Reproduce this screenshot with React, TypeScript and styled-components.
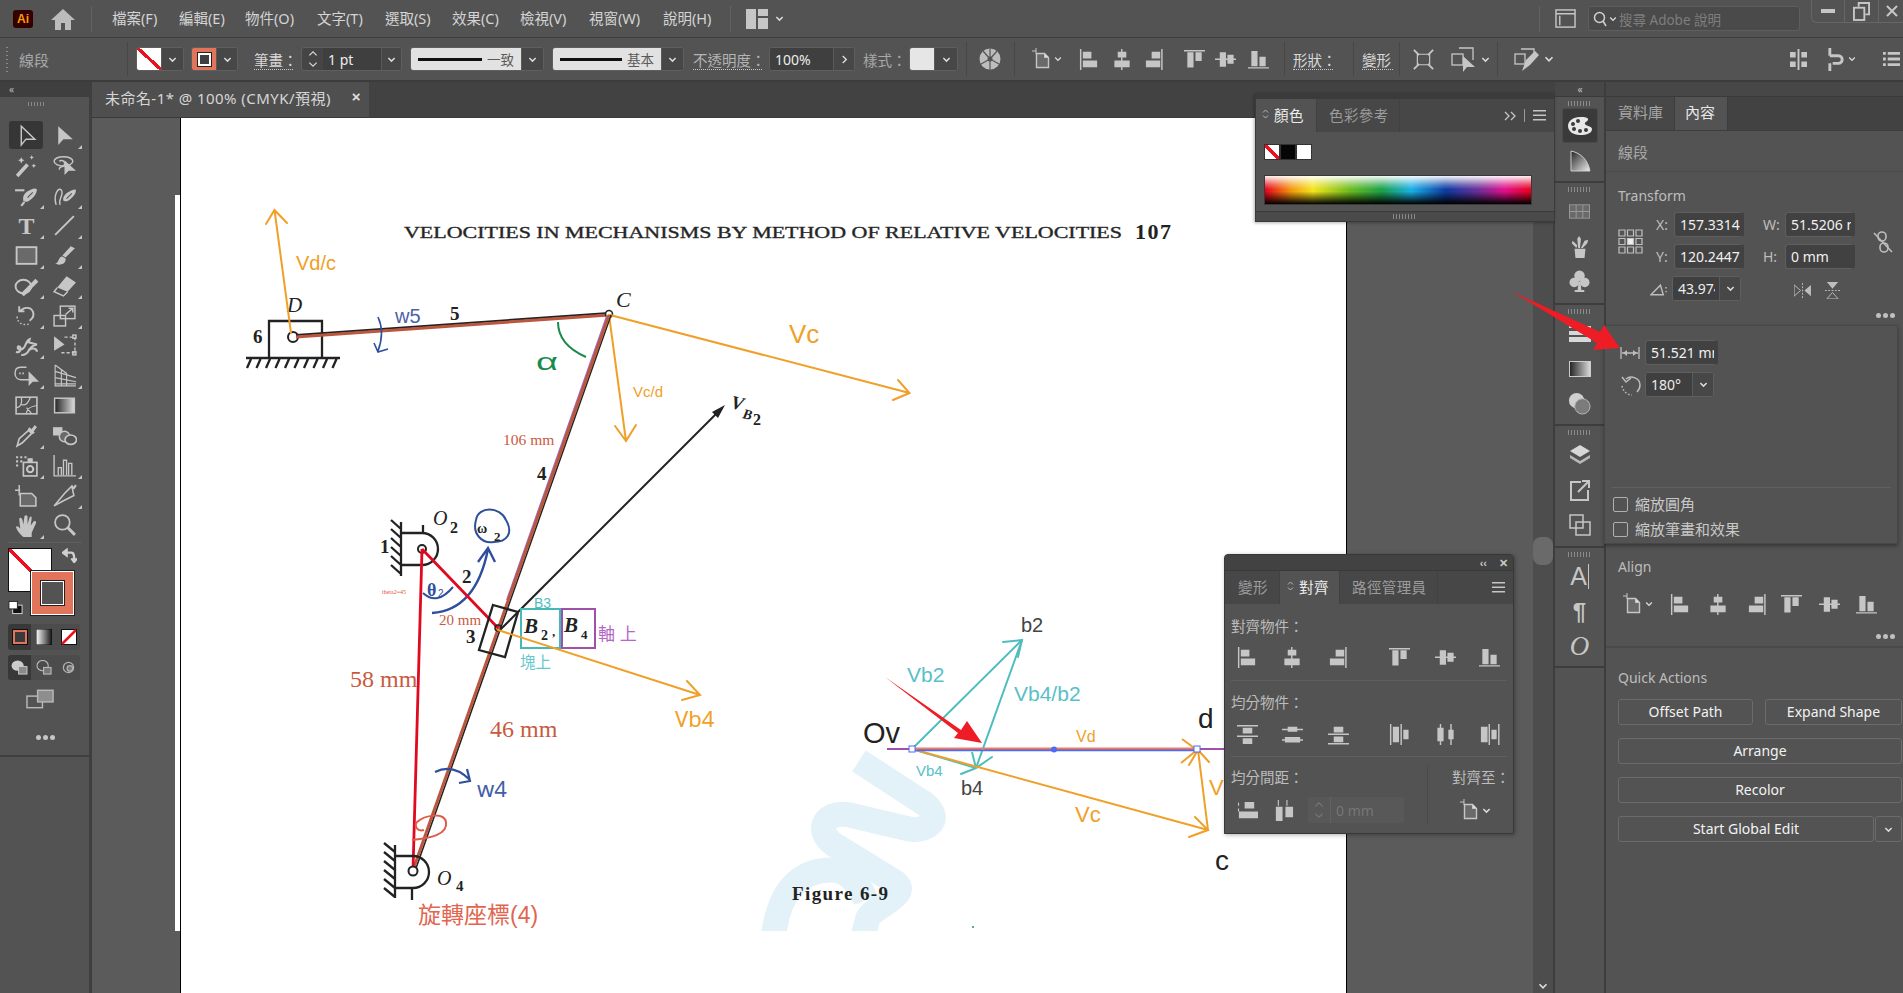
import React from 'react';
import styled, { createGlobalStyle } from 'styled-components';

const CJK = `"Noto Sans", "Noto Sans CJK TC", sans-serif`;
const SERIF = `"Liberation Serif", "Noto Sans CJK TC", serif`;
const SANS = `"Liberation Sans", "Noto Sans CJK TC", sans-serif`;

const Global = createGlobalStyle`
  html, body { margin: 0; padding: 0; background: #535353; overflow: hidden; }
  * { box-sizing: border-box; }
  body { font-family: ${CJK}; color: #c8c8c8; }
`;

const Page = styled.div`
  position: relative; width: 1903px; height: 993px; overflow: hidden;
  display: flex; flex-direction: column; background: #535353;
`;

/* ---------- shared small parts ---------- */
const Svg = styled.svg<{ $c?: string }>`
  display: block; flex: none; color: ${p => p.$c || '#c6c6c6'};
`;
const Chev = ({ s = 9 }: { s?: number }) => (
  <Svg viewBox="0 0 10 10" width={s} height={s} fill="none" stroke="currentColor" strokeWidth={1.6} $c="#dcdcdc">
    <path d="M1.5 3.2 5 6.8 8.5 3.2" />
  </Svg>
);
const AlignToIcon = () => (
  <Svg viewBox="0 0 20 22" width={20} height={22} $c="#c6c6c6">
    <path d="M0 3h4M4 0v6" stroke="currentColor" strokeWidth="1" fill="none" />
    <path d="M4.5 5.5h8l4 4v10h-12z" fill="#6a6a6a" stroke="currentColor" strokeWidth="1.4" />
    <path d="M12.5 5.5v4h4" fill="#ddd" stroke="currentColor" strokeWidth="1" />
  </Svg>
);
const alignPaths: Record<string, string> = {
  l: 'M1 0h1.5v22H1zM4 3h9v7H4zM4 12h15v7H4z',
  hc: 'M9.5 0H11v22H9.5zM6 3h9v6H6zM2.500 12h16v7h-16z',
  r: 'M18 0h1.500v22H18zM8 3h9v7H8zM2 12h15v7H2z',
  t: 'M0 1h22v1.500H0zM3.500 3.500h6.500v16H3.500zM12 3.500h6.500v9H12z',
  vc: 'M0 10h22v1.500H0zM5 3.500h6.500v15H5zM13 6h6.500v9.500H13z',
  b: 'M0 19h22v1.500H0zM3.500 2h6.500v16H3.500zM12 8h6.500v10H12z',
  dt: 'M0 1h22v1.500H0zM0 12h22v1.500H0zM6 4h10v6H6zM6 15h10v6H6z',
  dvc: 'M0 5h22v1.500H0zM0 16h22v1.500H0zM6 3h10v5H6zM3 13.500h16v6H3z',
  db: 'M0 10h22v1.500H0zM0 20h22v1.500H0zM6 3h10v6H6zM6 13h10v6H6z',
  dl: 'M1 0h1.500v22H1zM12 0h1.500v22H12zM4 3h6.500v16H4zM15 6h5.500v10H15z',
  dhc: 'M5 0h1.500v22H5zM16 0h1.500v22H16zM2.500 4h6.500v14H2.500zM14 6h5.500v10H14z',
  dr: 'M10 0h1.500v22H10zM20 0h1.500v22H20zM2 3h7v16H2zM13 6h5.500v10H13z',
  sv: 'M8 2h10v7H8zM2 12h20v7H2zM1 3h1.200v3H1zM1 9h1.200v3H1z',
  sh: 'M3 7h7v15H3zM13 7h8v11h-8zM5 0h1.200v6H5zM14 0h1.200v6H14z',
};
const AlignIcon = ({ k, s = 21 }: { k: string; s?: number }) => (
  <Svg viewBox="0 0 22 22" width={s} height={s} $c="#c6c6c6">
    <path d={alignPaths[k]} fill="currentColor" />
  </Svg>
);
const Dots = styled.div<{ $mt?: number }>`
  display: flex; justify-content: flex-end; gap: 2px; margin-top: ${p => p.$mt || 0}px; padding-right: 8px;
  & > i { width: 5px; height: 5px; border-radius: 50%; background: #c0c0c0; display: block; }
`;
const ThreeDots = ({ mt }: { mt?: number }) => <Dots $mt={mt}><i /><i /><i /></Dots>;
const SpinIcon = () => (
  <Svg viewBox="0 0 7 12" width={7} height={12} fill="none" stroke="#b8b8b8" strokeWidth="1"><path d="M1 4.500L3.500 2L6 4.500M1 7.500L3.500 10L6 7.500" /></Svg>
);
const Burger = () => (
  <Svg viewBox="0 0 13 11" width={13} height={11} $c="#c6c6c6"><path d="M0 0h13v1.500H0zM0 4.500h13v1.500H0zM0 9h13v1.500H0z" fill="currentColor" /></Svg>
);

/* ---------- menu bar ---------- */
const MenuBar = styled.div`
  height: 38px; flex: none; display: flex; align-items: center; background: #535353;
  border-bottom: 1px solid #3d3d3d; padding-left: 13px; position: relative;
`;
const AiLogo = styled.div`
  width: 20px; height: 18px; background: #330000; border-radius: 3px; color: #ff9a00;
  font: bold 12px/18px ${SANS}; text-align: center; margin-right: 18px;
`;
const MenuSep = styled.div<{ $ml: number }>`
  width: 1px; height: 26px; background: #626262; margin-left: ${p => p.$ml}px;
`;
const MenuItem = styled.div<{ $w: number; $ml?: number }>`
  width: ${p => p.$w}px; margin-left: ${p => p.$ml || 0}px; font-size: 14.500px; color: #d4d4d4; white-space: nowrap;
  padding-bottom: 3px;
`;
const WorkspaceBtn = styled.div`
  display: flex; align-items: center; gap: 7px; margin-left: 15px;
`;
const PanelIconSlot = styled.div`
  margin-left: auto; display: flex; align-items: center; height: 100%;
`;
const TopSep = styled.div`
  width: 1px; height: 26px; background: #626262; margin-right: 15px;
`;
const SearchBox = styled.div`
  width: 212px; height: 25px; margin-left: 12px; margin-right: 11px; background: #4a4a4a; border: 1px solid #5e5e5e;
  border-radius: 3px; display: flex; align-items: center; gap: 2px; padding-left: 4px; font-size: 13.500px; color: #7e7e7e;
`;
const WinBox = styled.div`
  width: 92px; height: 23px; align-self: flex-start; border: 1px solid #666; border-top: 0; border-right: 0;
  border-bottom-left-radius: 6px; display: grid; grid-template-columns: 33px 34px 25px; align-items: center; justify-items: center;
`;
const WinCell = styled.div`
  width: 100%; height: 100%; display: flex; align-items: center; justify-content: center; border-right: 1px solid #666;
  &:last-child { border-right: 0; }
`;

/* ---------- control bar ---------- */
const ControlBar = styled.div`
  height: 44px; flex: none; display: flex; align-items: center; background: #535353; padding-left: 19px; position: relative;
  border-bottom: 2px solid #3c3c3c;
`;
const Grip = styled.div`
  position: absolute; left: 6px; top: 9px; width: 2px; height: 26px;
  background: repeating-linear-gradient(#8a8a8a 0 1px, transparent 1px 4px);
`;
const CtlTitle = styled.div`
  width: 108px; font-size: 15px; color: #a8a8a8;
`;
const CtlSep = styled.div<{ $ml?: number }>`
  width: 1px; height: 34px; background: #474747; margin-left: ${p => p.$ml || 0}px;
`;
const Combo = styled.div<{ $ml: number; $w: number; $h?: number }>`
  display: flex; align-items: stretch; height: ${p => p.$h || 24}px; width: ${p => p.$w}px; margin-left: ${p => p.$ml}px;
  border: 1px solid #5f5f5f; border-radius: 3px; background: #454545; overflow: hidden; flex: none;
`;
const ComboChev = styled.div`
  flex: 1; display: flex; align-items: center; justify-content: center; background: #474747; border-left: 1px solid #5a5a5a;
`;
const ComboField = styled.div<{ $w: number }>`
  width: ${p => p.$w}px; flex: none; overflow: hidden; white-space: nowrap; display: flex; align-items: center;
  padding-left: 5px; color: #ececec; font-size: 14px; background: #3f3f3f; border-right: 4px solid #3f3f3f;
`;
const NoneSwatch = styled.div`
  width: 24px; flex: none; background: linear-gradient(to top right, #fff 0 46%, #e8141c 46% 56%, #fff 56%);
`;
const StrokeSwatch = styled.div`
  width: 24px; flex: none; background: #e0755c; display: flex; align-items: center; justify-content: center;
  &::after { content: ''; width: 9px; height: 9px; border: 2px solid #fff; background: #3f3f3f; box-shadow: 0 0 0 1px #222; }
`;
const LightSwatch = styled.div`
  width: 24px; flex: none; background: #e6e6e6;
`;
const DashSwatch = styled.div<{ $w: number }>`
  width: ${p => p.$w}px; flex: none; background: #e2e2e2; display: flex; align-items: center; padding: 0 7px; gap: 5px;
  font-size: 13.500px; color: #5a5a5a; white-space: nowrap;
  & > b { display: block; flex: 1; height: 3px; background: #111; }
`;
const Stepper = styled.div`
  width: 21px; flex: none; display: flex; flex-direction: column; align-items: center; justify-content: center; gap: 1px;
`;
const CtlLabel = styled.div<{ $ml: number; $w: number; $dim?: boolean }>`
  width: ${p => p.$w}px; margin-left: ${p => p.$ml}px; flex: none; font-size: 14.500px; white-space: nowrap;
  color: ${p => p.$dim ? '#b4b4b4' : '#d8d8d8'}; border-bottom: 1px dotted #c8c8c8; line-height: 18px; margin-top: 2px;
`;
const PlainLabel = styled(CtlLabel)`
  border-bottom: 0; color: #a8a8a8;
`;
const CtlIcon = styled.div<{ $ml: number; $w: number }>`
  width: ${p => p.$w}px; margin-left: ${p => p.$ml}px; flex: none; display: flex; align-items: center; justify-content: center; gap: 2px;
`;
const CtlRight = styled.div`
  margin-left: auto; display: flex; align-items: center; padding-right: 3px;
`;

/* ---------- main ---------- */
const Main = styled.div`
  flex: 1; min-height: 0; display: flex;
`;
const LeftDock = styled.div`
  width: 92px; flex: none; display: flex; flex-direction: column; background: #3f3f3f;
`;
const LeftHead = styled.div`
  height: 15px; flex: none; padding-left: 9px; font-size: 10px; line-height: 14px; color: #bdbdbd; background: #3f3f3f; letter-spacing: -1px;
`;
const Toolbar = styled.div`
  width: 89px; flex: 1; background: #535353; display: flex; flex-direction: column; padding-left: 8px;
`;
const ToolGrip = styled.div`
  width: 18px; height: 4px; margin: 5px 0 14px 20px; flex: none;
  background: repeating-linear-gradient(90deg, #888 0 1px, transparent 1px 3px);
`;
const ToolGrid = styled.div`
  display: grid; grid-template-columns: 38px 38px; grid-auto-rows: 30px; flex: none;
`;
const ToolCell = styled.div<{ $active?: boolean; $corner?: boolean }>`
  position: relative; display: flex; align-items: center; justify-content: center; width: 34px; height: 28px; margin-left: 1px; align-self: center;
  background: ${p => p.$active ? '#363636' : 'transparent'}; border-radius: 3px;
  &::after { content: ''; display: ${p => p.$corner ? 'block' : 'none'}; position: absolute; right: -1px; bottom: 0;
    border-left: 4px solid transparent; border-bottom: 4px solid #c6c6c6; }
`;
const ToolSep = styled.div`
  height: 1px; background: #5e5e5e; width: 74px; margin-top: 2px; flex: none;
`;
const ColorWell = styled.div`
  position: relative; height: 67px; margin-top: 5px; flex: none;
`;
const FillBox = styled.div`
  position: absolute; left: 0; top: 0; width: 44px; height: 44px; border: 1px solid #111;
  background: linear-gradient(to top right, #fff 0 47%, #ee1020 47% 53%, #fff 53%);
`;
const StrokeBox = styled.div`
  position: absolute; left: 23px; top: 23px; width: 43px; height: 44px; background: #e0755c; border: 1px solid #fff; outline: 1px solid #222;
  display: flex; align-items: center; justify-content: center;
  &::after { content: ''; width: 21px; height: 22px; background: #535353; border: 1px solid #fff; outline: 1px solid #222; }
`;
const SwapSlot = styled.div`
  position: absolute; left: 54px; top: 0;
`;
const DefaultSlot = styled.div`
  position: absolute; left: 0; top: 52px;
`;
const ModeRow = styled.div<{ $mt: number; $h: number }>`
  width: 72px; height: ${p => p.$h}px; margin-top: ${p => p.$mt}px; display: grid; grid-template-columns: 23px 26px 23px; flex: none;
  background: #4c4c4c; border-radius: 3px; overflow: hidden;
`;
const ModeCell = styled.div<{ $active?: boolean }>`
  display: flex; align-items: center; justify-content: center; background: ${p => p.$active ? '#383838' : 'transparent'};
`;
const ScreenBtn = styled.div`
  margin: 9px 0 0 18px; flex: none;
`;
const ToolDots = styled.div`
  margin: 26px 0 0 28px; display: flex; gap: 2px; flex: none;
  & > i { width: 5px; height: 5px; border-radius: 50%; background: #c6c6c6; display: block; }
`;
const ToolEnd = styled.div`
  height: 2px; margin: 15px 0 0 -8px; background: #3f3f3f; flex: none;
`;

const Center = styled.div`
  flex: 1; min-width: 0; display: flex; flex-direction: column; background: #424242;
`;
const TabBar = styled.div`
  height: 36px; flex: none; display: flex; background: #424242; border-bottom: 1px solid #3a3a3a;
`;
const DocTab = styled.div`
  width: 277px; background: #4f4f4f; display: flex; align-items: center; padding: 0 0 4px 13px; font-size: 15px; letter-spacing: .45px; color: #d6d6d6; white-space: nowrap;
  position: relative;
`;
const DocClose = styled.span`
  position: absolute; right: 8px; top: 6px; font: bold 15px/18px ${SANS}; color: #e0e0e0;
`;
const CanvasRow = styled.div`
  flex: 1; min-height: 0; display: flex;
`;
const Canvas = styled.div`
  flex: 1; position: relative; background: #5b5b5b; overflow: hidden;
`;
const PasteStrip = styled.div`
  position: absolute; left: 83px; top: 77px; width: 5px; height: 736px; background: #fff;
`;
const Artboard = styled.div`
  position: absolute; left: 88px; top: 0; width: 1167px; height: 875px; background: #fff;
  border-left: 1.500px solid #000; border-right: 1.500px solid #000;
`;
const VScroll = styled.div`
  width: 22px; flex: none; background: #4d4d4d; border-right: 2px solid #3d3d3d; position: relative;
`;
const ScrollThumb = styled.div`
  position: absolute; left: 0; top: 419px; width: 20px; height: 28px; border-radius: 8px; background: #6a6a6a;
`;
const ScrollDown = styled.div`
  position: absolute; left: 5px; bottom: 2px;
`;

/* ---------- dock strip ---------- */
const Dock = styled.div`
  width: 51px; flex: none; display: flex; flex-direction: column; background: #535353; border-right: 2px solid #3d3d3d;
`;
const DockHead = styled.div`
  height: 15px; flex: none; background: #474747; border-bottom: 1px solid #3a3a3a; text-align: center; font-size: 10px; line-height: 14px; color: #c4c4c4; letter-spacing: -1px;
`;
const DockGroup = styled.div<{ $h: number }>`
  height: ${p => p.$h}px; flex: none; border-bottom: 2px solid #3d3d3d; display: flex; flex-direction: column; align-items: center;
`;
const DockGrip = styled.div`
  width: 24px; height: 5px; margin: 4px 0 2px; flex: none;
  background: repeating-linear-gradient(90deg, #8a8a8a 0 1px, transparent 1px 3px);
`;
const DockBtn = styled.div<{ $active?: boolean }>`
  width: 36px; height: 35px; flex: none; display: flex; align-items: center; justify-content: center; border-radius: 3px;
  background: ${p => p.$active ? '#3a3a3a' : 'transparent'}; border: ${p => p.$active ? '1px solid #4a4a4a' : '0'};
`;
const GlyphA = styled.span`
  font: 25px/1 ${SANS}; color: #c6c6c6; border-right: 1px solid #c6c6c6; padding-right: 1px;
`;
const GlyphPil = styled.span`
  font: bold 24px/1 ${SANS}; color: #c6c6c6;
`;
const GlyphO = styled.span`
  font: italic 27px/1 ${SERIF}; color: #c6c6c6;
`;

/* ---------- properties ---------- */
const Props = styled.div`
  width: 297px; flex: none; display: flex; flex-direction: column; background: #535353;
`;
const PropsHead = styled.div`
  height: 15px; flex: none; background: #474747; border-bottom: 1px solid #3a3a3a;
`;
const PropTabs = styled.div`
  height: 34px; flex: none; display: flex; background: #424242; border-bottom: 1px solid #3d3d3d;
`;
const PropTab = styled.div<{ $w: number; $active?: boolean; $pl: number }>`
  width: ${p => p.$w}px; padding-left: ${p => p.$pl}px; line-height: 31px; font-size: 15px;
  background: ${p => p.$active ? '#535353' : '#474747'}; color: ${p => p.$active ? '#e6e6e6' : '#a6a6a6'};
  border-right: 1px solid #3d3d3d;
`;
const PropTitle = styled.div`
  height: 41px; flex: none; padding-left: 12px; line-height: 43px; font-size: 15px; color: #a8a8a8; border-bottom: 1px solid #4a4a4a;
`;
const Section = styled.div<{ $h: number }>`
  height: ${p => p.$h}px; flex: none; padding-left: 12px; position: relative;
`;
const SecTitle = styled.div<{ $mt: number }>`
  font-size: 14px; line-height: 18px; color: #bdbdbd; margin-top: ${p => p.$mt}px;
`;
const TransformGrid = styled.div`
  display: grid; grid-template-columns: 38px 18px 70px 19px 22px 70px 18px 19px; grid-auto-rows: 25px; row-gap: 7px; margin-top: 7px;
`;
const RefPoint = styled.div`
  grid-row: 1 / span 2; grid-column: 1; align-self: center; margin-top: 2px;
`;
const FieldLabel = styled.div<{ $col: number }>`
  grid-column: ${p => p.$col}; font-size: 14px; line-height: 25px; color: #bdbdbd;
`;
const Field = styled.div<{ $col?: number; $w?: number }>`
  ${p => p.$col ? `grid-column: ${p.$col};` : ''} ${p => p.$w ? `width: ${p.$w}px; flex: none;` : ''}
  height: 25px; background: #414141; border: 1px solid #5e5e5e; border-right: 4px solid #414141; border-radius: 3px; padding-left: 5px;
  font-size: 14px; line-height: 23px; color: #f0f0f0; overflow: hidden; white-space: nowrap;
`;
const LinkSlot = styled.div`
  grid-row: 1 / span 2; grid-column: 8; align-self: center; margin-top: 2px;
`;
const AngleRow = styled.div`
  grid-column: 1 / span 3; display: flex; align-items: center; padding-left: 32px; gap: 4px;
`;
const FlipRow = styled.div`
  grid-column: 4 / span 4; display: flex; align-items: center; padding: 3px 0 0 50px; gap: 14px;
`;
const ActionRow = styled.div<{ $cols: string; $mt: number }>`
  display: grid; grid-template-columns: ${p => p.$cols}; gap: 1px 12px; margin-top: ${p => p.$mt}px; padding-right: 1px;
`;
const ActionBtn = styled.div`
  height: 26px; border: 1.500px solid #6b6b6b; border-radius: 3px; text-align: center; font-size: 14px; line-height: 23px; color: #f2f2f2;
`;
const SplitRow = styled.div`
  display: flex; gap: 1px; margin-top: 13px; padding-right: 1px;
`;
const SplitMain = styled(ActionBtn)`
  width: 256px;
`;
const SplitChev = styled(ActionBtn)`
  flex: 1; display: flex; align-items: center; justify-content: center;
`;
const AlignRow = styled.div`
  display: grid; grid-template-columns: 48px 38px 39px 34px 38px 37px 24px; margin: 16px 0 0 4px; height: 24px; align-items: center; justify-items: start;
`;
const SecRule = styled.div<{ $mt: number }>`
  height: 2px; background: #4a4a4a; margin: ${p => p.$mt}px 0 0 -12px; flex: none;
`;

/* ---------- floating panels ---------- */
const Popover = styled.div`
  position: absolute; left: 1604px; top: 325px; width: 294px; height: 219px; background: #535353; border: 1px solid #474747;
  box-shadow: 0 2px 4px rgba(0,0,0,.35); padding: 14px 0 0 15px; display: flex; flex-direction: column;
`;
const PopRow = styled.div<{ $mt?: number }>`
  display: flex; align-items: center; gap: 5px; margin-top: ${p => p.$mt || 0}px;
`;
const PopRule = styled.div`
  height: 1px; background: #606060; margin: 90px 6px 0 -8px;
`;
const CheckRow = styled.div<{ $mt: number }>`
  display: flex; align-items: center; gap: 7px; margin: ${p => p.$mt}px 0 0 -7px; font-size: 15px; line-height: 15px; color: #c8c8c8;
`;
const CheckBox = styled.div`
  width: 15px; height: 15px; border: 1.500px solid #b0b0b0; border-radius: 2px;
`;
const ColorPanel = styled.div`
  position: absolute; left: 1255px; top: 93px; width: 300px; height: 129px; background: #535353; border: 1px solid #3a3a3a;
  display: flex; flex-direction: column; box-shadow: -1px 1px 3px rgba(0,0,0,.3);
`;
const PanelStrip = styled.div`
  height: 5px; background: #3b3b3b; flex: none;
`;
const PanelTabs = styled.div<{ $h: number }>`
  height: ${p => p.$h}px; flex: none; display: flex; align-items: stretch; background: #474747; position: relative;
`;
const PanelTab = styled.div<{ $w: number; $active?: boolean; $pl: number }>`
  width: ${p => p.$w}px; padding: 0 0 3px ${p => p.$pl}px; display: flex; align-items: center; gap: 5px; font-size: 14.500px; flex: none; white-space: nowrap;
  background: ${p => p.$active ? '#535353' : '#474747'}; color: ${p => p.$active ? '#ececec' : '#9c9c9c'}; border-right: 1px solid #414141; letter-spacing: .4px;
`;
const TabTools = styled.div`
  margin-left: auto; display: flex; align-items: center; gap: 8px; padding-right: 8px; color: #c4c4c4; font-size: 13px;
`;
const VDiv = styled.div`
  width: 1px; height: 13px; background: #9a9a9a;
`;
const Swatches = styled.div`
  display: flex; margin: 12px 0 0 8px; flex: none;
`;
const Sw = styled.div<{ $bg: string }>`
  width: 16px; height: 16px; background: ${p => p.$bg}; border: 1px solid #333;
`;
const Spectrum = styled.div`
  margin: 15px 0 0 8px; width: 268px; height: 30px; flex: none; border: 1px solid #3a3a3a;
  background:
    linear-gradient(to bottom, rgba(255,255,255,.95) 0%, rgba(255,255,255,.3) 30%, rgba(255,255,255,0) 48%, rgba(0,0,0,0) 55%, rgba(0,0,0,.9) 96%, #000 100%),
    linear-gradient(to right, #e8001c 0%, #f39a10 10%, #f5e51c 18%, #6cbb1f 32%, #1aa04a 44%, #1ab0e6 55%, #0c3aa0 68%, #6a2f98 80%, #e0108c 90%, #e8001c 100%);
`;
const PanelGrip = styled.div`
  margin-top: auto; height: 10px; flex: none; background: #4a4a4a; border-top: 1px solid #3a3a3a; display: flex; justify-content: center; align-items: center;
  &::after { content: ''; width: 24px; height: 5px; background: repeating-linear-gradient(90deg, #8a8a8a 0 1px, transparent 1px 3px); }
`;
const AlignPanel = styled.div`
  position: absolute; left: 1224px; top: 554px; width: 290px; height: 280px; background: #535353; border: 1px solid #383838; border-radius: 4px 4px 0 0;
  display: flex; flex-direction: column; box-shadow: 1px 1px 4px rgba(0,0,0,.3);
`;
const AlignHead = styled.div`
  height: 16px; flex: none; background: #424242; display: flex; justify-content: flex-end; align-items: center; gap: 12px; padding-right: 5px;
  font: bold 11px/14px ${SANS}; color: #c8c8c8; border-bottom: 1px solid #3a3a3a;
`;
const ABody = styled.div<{ $h: number }>`
  height: ${p => p.$h}px; flex: none; border-bottom: 1px solid #5f5f5f; margin: 0 6px;
`;
const ALabel = styled.div<{ $mt: number }>`
  font-size: 14.500px; line-height: 22px; color: #bcbcbc; margin: ${p => p.$mt}px 0 0 0; white-space: nowrap;
`;
const IconSix = styled.div<{ $mt: number }>`
  display: grid; grid-template-columns: 45px 46px 61px 46px 44px 24px; padding-left: 6px; margin-top: ${p => p.$mt}px; height: 24px; align-items: center; justify-items: start;
`;
const ABottom = styled.div`
  flex: 1; display: flex; margin: 0 6px; min-height: 0;
`;
const ALeft = styled.div`
  width: 196px; flex: none;
`;
const ARight = styled.div`
  flex: 1; border-left: 1px solid #4a4a4a; margin: 8px 0 8px 0; text-align: right; display: flex; flex-direction: column; align-items: flex-end;
`;
const SpaceRow = styled.div`
  display: flex; align-items: center; margin-top: 9px; padding-left: 6px; gap: 15px;
`;
const GhostInput = styled.div`
  width: 96px; height: 26px; margin-left: -1px; background: #585858; display: flex; align-items: center; border-radius: 2px; color: #767676; font-size: 14px;
`;
const GhostStep = styled.div`
  width: 23px; display: flex; align-items: center; justify-content: center; border-right: 1px solid #626262; height: 100%;
`;
const GhostVal = styled.span`
  padding-left: 5px;
`;
const RightLabel = styled.div`
  font-size: 14.500px; line-height: 22px; color: #bcbcbc; margin: 1px -3px 0 0; white-space: nowrap;
`;
const RightIcon = styled.div`
  display: flex; align-items: center; gap: 2px; margin: 11px 16px 0 0;
`;
const Overlay = styled.svg`
  position: absolute; left: 0; top: 0; pointer-events: none;
`;

/* ---------- diagram text ---------- */
const T = styled.text<{ $s: number; $c?: string; $f?: string; $b?: boolean; $i?: boolean }>`
  font-family: ${p => p.$f || SANS}; font-size: ${p => p.$s}px; fill: ${p => p.$c || '#222'};
  font-weight: ${p => p.$b ? 700 : 400}; font-style: ${p => p.$i ? 'italic' : 'normal'};
`;
const DiagramSvg = styled.svg`
  display: block;
`;

const OR = '#f0a028', TEAL = '#4fbdc0', BR = '#b9573f', RED = '#e0091f', BLUE = '#2f4f9c', NOTE = '#c95a3f';

const Arrow = ({ a, b, h1, h2, c, w = 2 }: { a: number[]; b: number[]; h1: number[]; h2: number[]; c: string; w?: number }) => (
  <path d={`M${a[0]} ${a[1]}L${b[0]} ${b[1]}M${h1[0]} ${h1[1]}L${b[0]} ${b[1]}L${h2[0]} ${h2[1]}`} stroke={c} strokeWidth={w} fill="none" strokeLinecap="round" />
);

const hatchH = Array.from({ length: 10 }, (_, i) => `M${251 + i * 9.500} 359l-4 9`).join('');
const hatchO2 = Array.from({ length: 6 }, (_, i) => `M401 ${529 + i * 9}l-10 -9`).join('');
const hatchO4 = Array.from({ length: 6 }, (_, i) => `M395 ${852 + i * 9}l-11 -9`).join('');

const Diagram = () => (
  <DiagramSvg width="1164" height="875" viewBox="181 118 1164 875">
    {/* watermark */}
    <g clipPath="url(#wm)">
      <path d="M859 761L925 804C945 820 925 834 905 828L850 815C820 810 815 835 838 847L895 882C912 895 875 905 868 918L862 940"
        fill="none" stroke="#e2f2f8" strokeWidth="25" />
      <path d="M773 940C778 890 800 870 832 870C850 870 862 890 866 900" fill="none" stroke="#e2f2f8" strokeWidth="25" />
    </g>
    <defs><clipPath id="wm"><rect x="181" y="118" width="1164" height="813" /></clipPath></defs>

    <T x="404" y="238" $s={17} $f={SERIF} textLength={718} lengthAdjust="spacingAndGlyphs" $c="#222" stroke="#333" strokeWidth=".4">VELOCITIES IN MECHANISMS BY METHOD OF RELATIVE VELOCITIES</T>
    <T x="1135" y="239" $s={22} $f={SERIF} $b $c="#222" textLength={36}>107</T>

    {/* upper slider */}
    <path d={`M269 357V321H322V357M246 358H340${hatchH}`} stroke="#222" strokeWidth="2.300" fill="none" />
    <circle cx="293" cy="337" r="5" fill="#fff" stroke="#222" strokeWidth="2" />
    <T x="253" y="343" $s={19} $f={SERIF} $b>6</T>
    <T x="287" y="312" $s={21} $f={SERIF} $i>D</T>
    <Arrow a={[291, 333]} b={[274.500, 210]} h1={[266, 224]} h2={[287, 223]} c={OR} />
    <T x="296" y="270" $s={20} $c={OR}>Vd/c</T>

    {/* link 5 */}
    <path d="M296 335L609 313" stroke="#222" strokeWidth="2" />
    <path d="M296 337L609 315" stroke={BR} strokeWidth="3" />
    <circle cx="609" cy="314" r="3.500" fill="#fff" stroke="#222" strokeWidth="1.600" />
    <T x="450" y="320" $s={19} $f={SERIF} $b>5</T>
    <T x="395" y="323" $s={20} $c="#4a62a8">w5</T>
    <path d="M378 317Q385 332 378 351M374 343L378 352L388 349" stroke={BLUE} strokeWidth="1.600" fill="none" />
    <T x="616" y="307" $s={22} $f={SERIF} $i>C</T>
    <path d="M558 322C558 340 570 350 586 357" stroke="#1c8a4c" strokeWidth="2" fill="none" />
    <T x="536" y="370" $s={24} $c="#1c8a4c" textLength={22} lengthAdjust="spacingAndGlyphs">α</T>

    <Arrow a={[610, 315]} b={[909.500, 393]} h1={[898, 380]} h2={[893, 400]} c={OR} />
    <T x="789" y="343" $s={26} $c={OR}>Vc</T>
    <Arrow a={[609, 315]} b={[626, 441]} h1={[615, 426]} h2={[636, 425]} c={OR} />
    <T x="633" y="397" $s={15} $c={OR}>Vc/d</T>

    {/* link 4 */}
    <path d="M611 315L415 871" stroke="#222" strokeWidth="1.600" />
    <path d="M607 316L507 600" stroke="#a06cc0" strokeWidth="2" />
    <path d="M609 315L413 870" stroke={BR} strokeWidth="3" />
    <T x="503" y="445" $s={15.500} $f={SERIF} $c={NOTE}>106 mm</T>
    <T x="537" y="480" $s={19} $f={SERIF} $b>4</T>

    <path d="M500 630L722 408" stroke="#222" strokeWidth="2" />
    <path d="M725 405L712 412L718 418Z" fill="#222" />
    <T x="730" y="408" $s={19} $f={SERIF} $i $b transform="rotate(12 730 408)">V</T>
    <T x="742" y="418" $s={14} $f={SERIF} $i $b transform="rotate(12 742 418)">B</T>
    <T x="753" y="425" $s={16} $f={SERIF} $b>2</T>

    {/* O2 */}
    <path d={`M401 522V576${hatchO2}M401 533H422A16 16 0 0 1 422 565H401M423 525V533`} stroke="#222" strokeWidth="2.300" fill="none" />
    <circle cx="422" cy="549" r="4" fill="#fff" stroke="#222" strokeWidth="2" />
    <T x="380" y="553" $s={19} $f={SERIF} $b>1</T>
    <T x="433" y="525" $s={20} $f={SERIF} $i>O</T>
    <T x="450" y="533" $s={16} $f={SERIF} $b>2</T>
    <path d="M476 520C478 506 500 506 506 520C514 534 506 542 494 542C482 544 472 534 476 520Z" stroke={BLUE} strokeWidth="2" fill="none" />
    <T x="477" y="533" $s={14} $f={SERIF} $b>ω</T>
    <T x="494" y="541" $s={13} $f={SERIF} $b>2</T>
    <path d="M432 613Q476 610 488 549M478 562L488 548L495 562" stroke={BLUE} strokeWidth="2.400" fill="none" />
    <path d="M423 593Q437 606 453 587" stroke={BLUE} strokeWidth="2" fill="none" />
    <T x="427" y="596" $s={18} $c={BLUE} $b $f={SERIF}>θ</T>
    <T x="438" y="597" $s={10} $c={BLUE}>2</T>
    <T x="462" y="583" $s={19} $f={SERIF} $b>2</T>
    <T x="382" y="594" $s={6} $c="#e0503a" $f={SERIF}>theta2=45</T>

    <T x="439" y="625" $s={15} $f={SERIF} $c={NOTE}>20 mm</T>
    <T x="350" y="687" $s={24} $f={SERIF} $c={NOTE}>58 mm</T>
    <T x="490" y="737" $s={24} $f={SERIF} $c={NOTE}>46 mm</T>

    <path d="M422 549L498 628M422 549L413 870" stroke={RED} strokeWidth="2.800" fill="none" />
    <path d="M493 605L518 612L505 657L479 650Z" stroke="#222" strokeWidth="2.300" fill="none" />
    <circle cx="498" cy="628" r="3" fill="none" stroke="#222" strokeWidth="1.500" />
    <T x="466" y="643" $s={19} $f={SERIF} $b>3</T>

    <T x="534" y="608" $s={14} $c={TEAL}>B3</T>
    <rect x="521" y="609" width="39" height="39" fill="none" stroke="#45b8b8" strokeWidth="2" />
    <rect x="562" y="609" width="33" height="39" fill="none" stroke="#a050a8" strokeWidth="2" />
    <T x="524" y="633" $s={21} $f={SERIF} $i $b>B</T>
    <T x="541" y="640" $s={14} $f={SERIF} $b>2</T>
    <T x="552" y="636" $s={13} $f={SERIF} $b>,</T>
    <T x="564" y="632" $s={21} $f={SERIF} $i $b>B</T>
    <T x="581" y="639" $s={13} $f={SERIF} $b>4</T>
    <T x="598" y="640" $s={17} $c="#b466c4">軸 上</T>
    <T x="520" y="668" $s={15.500} $c="#66c8cc">塊上</T>

    <Arrow a={[498, 630]} b={[700, 695]} h1={[687, 681]} h2={[682, 700]} c={OR} />
    <T x="675" y="727" $s={22} $c={OR} $f={`"Noto Sans", sans-serif`}>Vb4</T>
    <path d="M435 772Q453 763 470 780M459 783L470 781L467 769" stroke={BLUE} strokeWidth="2.200" fill="none" />
    <T x="477" y="797" $s={22} $c="#3f5fa8" $f={`"Noto Sans", sans-serif`}>w4</T>
    <path d="M412 840C430 838 448 835 446 822C444 812 425 815 417 822C414 826 417 832 424 830" stroke="#e05a48" strokeWidth="2" fill="none" />

    {/* O4 */}
    <path d={`M395 845V898${hatchO4}M395 856H413A16 16 0 0 1 413 888H395M412 888V900`} stroke="#222" strokeWidth="2.300" fill="none" />
    <circle cx="413" cy="871" r="4.500" fill="#fff" stroke="#222" strokeWidth="2" />
    <T x="437" y="885" $s={20} $f={SERIF} $i>O</T>
    <T x="456" y="891" $s={15} $f={SERIF} $b>4</T>
    <T x="418" y="923" $s={23} $c="#e2654f">旋轉座標(4)</T>
    <T x="792" y="900" $s={19} $f={SERIF} $b textLength={96} $c="#222">Figure 6-9</T>
    <circle cx="973" cy="927" r="1" fill="#3a8a5a" />

    {/* velocity polygon */}
    <path d="M887 749H1230" stroke="#a050a8" strokeWidth="2.200" />
    <Arrow a={[912, 749]} b={[1022, 640]} h1={[1003, 642]} h2={[1018, 657]} c={TEAL} />
    <Arrow a={[1022, 640]} b={[976, 768]} h1={[961, 774]} h2={[992, 757]} c={TEAL} />
    <path d="M972 752L976 768M912 749L976 768" stroke={TEAL} strokeWidth="2" fill="none" />
    <Arrow a={[912, 749]} b={[1208, 830]} h1={[1195, 817]} h2={[1189, 837]} c={OR} />
    <Arrow a={[1208, 830]} b={[1198, 750]} h1={[1189, 765]} h2={[1209, 762]} c={OR} />
    <path d="M1182 739L1197 750L1181 763" stroke={OR} strokeWidth="2" fill="none" />
    <path d="M912 748.500H1197" stroke="#e58063" strokeWidth="2" />
    <path d="M912 750.500H1197" stroke="#4a6cf7" strokeWidth="1.500" />
    <rect x="909" y="746" width="6" height="6" fill="#fff" stroke="#4a6cf7" strokeWidth="1" />
    <rect x="1194" y="746" width="6" height="6" fill="#fff" stroke="#4a6cf7" strokeWidth="1" />
    <circle cx="1054" cy="749.500" r="3" fill="#4a6cf7" />
    <T x="863" y="743" $s={29}>Ov</T>
    <T x="1198" y="728" $s={28}>d</T>
    <T x="1215" y="870" $s={28}>c</T>
    <T x="1021" y="632" $s={20} $c="#444">b2</T>
    <T x="961" y="795" $s={20} $c="#444">b4</T>
    <T x="907" y="682" $s={21} $c="#58c0c8">Vb2</T>
    <T x="1014" y="701" $s={21} $c="#58c0c8">Vb4/b2</T>
    <T x="916" y="776" $s={15} $c="#58c0c8">Vb4</T>
    <T x="1076" y="742" $s={16} $c={OR}>Vd</T>
    <T x="1075" y="822" $s={22} $c={OR}>Vc</T>
    <T x="1209" y="795" $s={22} $c={OR}>Vd/c</T>
    <path d="M885 677L961 730L967 721L982 743L954 738L958 733Z" fill="#ee1c25" />
  </DiagramSvg>
);

/* ---------- tools ---------- */
const TI = ({ children }: { children: React.ReactNode }) => (
  <Svg viewBox="0 0 24 24" width={25} height={25} fill="none" stroke="currentColor" strokeWidth={1.400} $c="#c6c6c6">{children}</Svg>
);
const F = { fill: 'currentColor', stroke: 'none' };
const GF = { fill: '#6a6a6a' };
const tools: [React.ReactNode, boolean?][] = [
  [<path d="M7 3V21L11.500 15.500H20Z" />],
  [<path d="M6 3V21L11 15.500H20Z" {...F} />, true],
  [<><path d="M3 22L13 11" strokeWidth={3.500} /><path d="M7 4l1 2 2 1-2 1-1 2-1-2-2-1 2-1zM17 2l.7 1.500 1.500.7-1.500.7-.7 1.500-.7-1.500-1.500-.7 1.500-.7zM19 10l.7 1.500 1.500.7-1.500.7-.7 1.500-.7-1.500-1.500-.7 1.500-.7z" {...F} /></>],
  [<><ellipse cx="11" cy="8" rx="9" ry="4.500" /><path d="M7 8a3 3 0 1 1 3 5c-2 1-3 0-3 3" /><path d="M12 7V21L16 17H23Z" {...F} /></>],
  [<><path d="M1 7H10" strokeWidth={2} /><path d="M9 17C8 13 10 10 13 8L17 6C19 5 21 5 22 6C22 9 20 13 17 15C14 18 11 19 9 17Z" {...F} /><path d="M13 14L18 9" stroke="#535353" strokeWidth={1} /><path d="M7 22L10 18" strokeWidth={2} /></>, true],
  [<><path d="M4 21C1 12 6 3 9 7C12 11 5 17 8 21" /><path d="M11 17C10 14 12 11 15 9L19 7C21 6 23 6 23 7C23 10 21 13 18 15C15 18 13 18 11 17Z" {...F} /><path d="M14 15L19 10" stroke="#535353" strokeWidth={1} /></>, true],
  [<text x="12" y="20" textAnchor="middle" fontFamily="Liberation Serif, serif" fontWeight="700" fontSize="23" fill="currentColor" stroke="none">T</text>, true],
  [<path d="M3 21L21 3" strokeWidth={1.800} />, true],
  [<rect x="2.500" y="4" width="19" height="16" {...GF} strokeWidth={1.800} />, true],
  [<><path d="M18 3L22 5L13 14L10 12Z" {...F} /><path d="M10 13C6 13 7 19 3 20C8 22 14 20 13 15Z" {...F} /></>, true],
  [<><ellipse cx="9" cy="13" rx="7.500" ry="6.500" strokeWidth={1.800} /><path d="M8 21L22 7" strokeWidth={4} /></>, true],
  [<><path d="M14 3L23 9L15 18L5 14Z" {...F} /><path d="M5 14L2 18L11 22L15 18" strokeWidth={1.400} /></>, true],
  [<><path d="M15 17C22 12 18 3 10 5L5 8M5 3V8H10" strokeWidth={1.800} /><path d="M3 13C3 20 10 22 15 20" strokeDasharray="1.500 2" /></>, true],
  [<><rect x="2" y="12" width="11" height="10" /><rect x="8" y="3" width="14" height="12" /><path d="M13 11L20 5M16 5H20V9" /></>, true],
  [<path d="M2 18C6 20 8 14 5 13C3 12 3 16 6 16C12 16 10 8 15 6L14 9L22 11C18 12 16 13 15 16C18 14 22 15 22 18M7 21C11 22 14 18 15 15" strokeWidth={2} />, true],
  [<><path d="M2 3V17L12 11Z" {...F} /><path d="M12 4H22V19H7" strokeDasharray="3 2" strokeWidth={1.300} /><rect x="20" y="2" width="3" height="3" /><rect x="20" y="18" width="3" height="3" /></>],
  [<><path d="M12 4H6C2 4 1 7 1 10C1 14 4 16 7 16L15 16" /><path d="M14 8V22L18 18H24Z" {...F} /><path d="M5 10H11" strokeDasharray="1.500 1.500" strokeWidth={1.600} /></>, true],
  [<path d="M3 2V22H23M3 2L14 10V22M3 8L23 14M3 14L23 18M9 6V22M3 20H23" strokeWidth={1.100} />, true],
  [<><rect x="2" y="4" width="20" height="16" strokeWidth={1.500} /><path d="M2 14C7 14 8 9 7 4M7 11C12 13 14 8 16 4M12 20C12 15 15 13 22 12M12 14L17 20" strokeWidth={1.200} /></>],
  [<><defs><linearGradient id="tg"><stop offset="0" stopColor="#222" /><stop offset="1" stopColor="#ddd" /></linearGradient></defs><rect x="2.500" y="5" width="19" height="14" fill="url(#tg)" stroke="#c6c6c6" /></>],
  [<><path d="M3 22L5 15L14 7L17 10L8 19Z" strokeWidth={1.600} /><path d="M14 5L19 10" strokeWidth={2.600} /><path d="M16 7L20 2L22 4L18 9Z" {...F} /></>, true],
  [<><rect x="1" y="4" width="9" height="8" {...F} /><circle cx="12" cy="13" r="5" {...GF} /><ellipse cx="18" cy="16" rx="5.500" ry="4.500" fill="#535353" strokeWidth={1.600} /></>],
  [<><path d="M2 3h2v2H2zM6 3h2v2H6zM10 3h2v2h-2zM2 7h2v2H2zM6 7h2v2H6zM2 11h2v2H2z" {...F} /><rect x="9" y="9" width="13" height="13" strokeWidth={1.600} /><rect x="13" y="5" width="5" height="4" {...F} /><circle cx="15.500" cy="15.500" r="3" strokeWidth={2} /></>, true],
  [<path d="M2 2V22H23M6 21V14H9V21M11 21V7H14V21M16 21V10H19V21" strokeWidth={1.300} />, true],
  [<><path d="M5 2V12M1 7H6" /><path d="M6 10H17L21 14V22H6Z" {...GF} strokeWidth={1.500} /></>],
  [<><path d="M2 22L12 10L19 3L21 12L11 17Z" strokeWidth={1.500} /><path d="M19 3L21 5L23 2" strokeWidth={2} /></>, true],
  [<path d="M9 23C6 21 3 17 2 14C2 12 4 12 6 15L5 6C5 4 7 4 8 6L9 11L10 3C11 2 12 2 13 3L13 11L15 4C16 3 17 3 17 5L16 12L19 8C20 7 22 8 21 10L17 19L17 23Z" {...F} />, true],
  [<><circle cx="10" cy="9" r="7" strokeWidth={1.700} /><path d="M15 14L22 21" strokeWidth={2.800} /></>],
];

const DockIcons = {
  palette: <Svg viewBox="0 0 26 20" width={26} height={20} $c="#e8e8e8"><path d="M13 1C6 1 1 5 1 10C1 15 6 19 13 19C20 19 25 17 25 13C25 10 19 10 18 8C17 6 22 5 21 3C20 1 16 1 13 1Z" fill="currentColor" /><g fill="#3a3a3a"><circle cx="6" cy="8" r="2" /><circle cx="11" cy="5" r="2" /><circle cx="7" cy="13" r="2" /><circle cx="13" cy="15" r="2" /><circle cx="19" cy="14" r="2" /></g></Svg>,
  wedge: <Svg viewBox="0 0 22 22" width={22} height={22}><defs><linearGradient id="wd" x1="0" y1="0" x2="1" y2="1"><stop offset="0" stopColor="#222" /><stop offset="1" stopColor="#eee" /></linearGradient></defs><path d="M2 1C12 3 19 10 21 21H2Z" fill="url(#wd)" stroke="#ccc" /></Svg>,
  swatch: <Svg viewBox="0 0 22 15" width={21} height={15}><path d="M0 0h22v15H0z" fill="#999" /><path d="M1 1h6v6H1zM8 1h6v6H8zM15 1h6v6h-6zM1 8h6v6H1zM8 8h6v6H8zM15 8h6v6h-6z" fill="#6a6a6a" /></Svg>,
  brush: <Svg viewBox="0 0 22 26" width={20} height={24}><path d="M5 15h12l-1 10H6zM9 14L8 4l2-3 2 3-1 10zM12 14L16 6l4-1-1 4-5 5zM7 14L2 9l1-3 5 5z" fill="currentColor" /></Svg>,
  club: <Svg viewBox="0 0 22 24" width={21} height={23}><circle cx="11" cy="6" r="5.500" fill="currentColor" /><circle cx="5.500" cy="13" r="5" fill="currentColor" /><circle cx="16.500" cy="13" r="5" fill="currentColor" /><path d="M10 12h2l1 9h3v2H6v-2h3z" fill="currentColor" /></Svg>,
  stroke: <Svg viewBox="0 0 22 16" width={22} height={16}><path d="M0 0h22v2H0zM0 5h22v4H0zM0 11h22v5H0z" fill="#d8d8d8" /></Svg>,
  grad: <Svg viewBox="0 0 22 16" width={22} height={16}><defs><linearGradient id="dg"><stop offset="0" stopColor="#222" /><stop offset="1" stopColor="#ddd" /></linearGradient></defs><rect x=".5" y=".5" width="21" height="15" fill="url(#dg)" stroke="#ccc" /></Svg>,
  trans: <Svg viewBox="0 0 24 24" width={23} height={23}><circle cx="9" cy="9" r="8" fill="#cfcfcf" /><circle cx="15" cy="15" r="8" fill="#7b7b7b" stroke="#b8b8b8" /></Svg>,
  layers: <Svg viewBox="0 0 22 22" width={22} height={22}><path d="M11 1L21 7L11 13L1 7Z" fill="#d8d8d8" /><path d="M1 11L11 17L21 11V14L11 20L1 14Z" fill="#b8b8b8" /></Svg>,
  export: <Svg viewBox="0 0 24 24" width={24} height={24} fill="none" stroke="#c6c6c6" strokeWidth="2"><path d="M13 4H3V22H20V12M10 14L21 3M14 3H21V10" /></Svg>,
  board: <Svg viewBox="0 0 24 24" width={24} height={24} fill="none" stroke="#c6c6c6" strokeWidth="1.500"><rect x="2" y="2" width="13" height="13" /><rect x="8" y="9" width="14" height="13" /></Svg>,
};

const menus: [string, number][] = [['檔案(F)', 67], ['編輯(E)', 66], ['物件(O)', 72], ['文字(T)', 68], ['選取(S)', 67], ['效果(C)', 68], ['檢視(V)', 69], ['視窗(W)', 74], ['說明(H)', 67]];

const StepIcon = ({ c = '#d8d8d8' }: { c?: string }) => (
  <Svg viewBox="0 0 10 22" width={10} height={20} fill="none" stroke={c} strokeWidth="1.300"><path d="M1 7L5 3L9 7M1 15L5 19L9 15" /></Svg>
);

export default function App() {
  return (
    <Page>
      <Global />
      <MenuBar>
        <AiLogo>Ai</AiLogo>
        <Svg viewBox="0 0 24 22" width={24} height={22} $c="#bcbcbc"><path d="M12 1L24 12H20V22H14V15H10V22H4V12H0Z" fill="currentColor" /></Svg>
        <MenuSep $ml={16} />
        <MenuItem $w={67} $ml={20}>{menus[0][0]}</MenuItem>
        {menus.slice(1).map(([t, w]) => <MenuItem key={t} $w={w}>{t}</MenuItem>)}
        <MenuSep $ml={0} />
        <WorkspaceBtn>
          <Svg viewBox="0 0 22 20" width={22} height={20}><path d="M0 0h10v20H0zM12 0h10v7H12zM12 9h10v11H12z" fill="currentColor" /></Svg>
          <Chev />
        </WorkspaceBtn>
        <PanelIconSlot>
          <TopSep />
          <Svg viewBox="0 0 22 22" width={21} height={21} fill="none" stroke="currentColor" strokeWidth="1.500"><rect x="1" y="2" width="20" height="18" /><path d="M1 6H21M5 8V18" /></Svg>
          <SearchBox>
            <Svg viewBox="0 0 14 16" width={14} height={16} fill="none" stroke="#d0d0d0" strokeWidth="1.500"><circle cx="6.500" cy="6.500" r="5" /><path d="M10 10L13 15" /></Svg>
            <Chev s={8} />
            <span>搜尋 Adobe 說明</span>
          </SearchBox>
          <WinBox>
            <WinCell><Svg viewBox="0 0 14 4" width={14} height={4}><path d="M0 0h14v4H0z" fill="currentColor" /></Svg></WinCell>
            <WinCell><Svg viewBox="0 0 18 20" width={17} height={19} fill="none" stroke="currentColor" strokeWidth="2"><rect x="1" y="6" width="11" height="13" /><path d="M6 5V1H17V13H13" /></Svg></WinCell>
            <WinCell><Svg viewBox="0 0 12 12" width={12} height={12} fill="none" stroke="currentColor" strokeWidth="2"><path d="M1 1L11 11M11 1L1 11" /></Svg></WinCell>
          </WinBox>
        </PanelIconSlot>
      </MenuBar>

      <ControlBar>
        <Grip />
        <CtlTitle>線段</CtlTitle>
        <CtlSep />
        <Combo $ml={8} $w={48}><NoneSwatch /><ComboChev><Chev /></ComboChev></Combo>
        <Combo $ml={7} $w={47}><StrokeSwatch /><ComboChev><Chev /></ComboChev></Combo>
        <CtlLabel $ml={16} $w={39}>筆畫：</CtlLabel>
        <Combo $ml={8} $w={101}>
          <Stepper><StepIcon /></Stepper>
          <ComboField $w={58}>1 pt</ComboField>
          <ComboChev><Chev /></ComboChev>
        </Combo>
        <Combo $ml={8} $w={134}><DashSwatch $w={110}><b />一致</DashSwatch><ComboChev><Chev /></ComboChev></Combo>
        <Combo $ml={8} $w={132}><DashSwatch $w={108}><b />基本</DashSwatch><ComboChev><Chev /></ComboChev></Combo>
        <CtlLabel $ml={9} $w={69} $dim>不透明度：</CtlLabel>
        <Combo $ml={7} $w={86}>
          <ComboField $w={63}>100%</ComboField>
          <ComboChev><Svg viewBox="0 0 10 10" width={9} height={9} fill="none" stroke="#ddd" strokeWidth="1.500"><path d="M3 1L7 5L3 9" /></Svg></ComboChev>
        </Combo>
        <PlainLabel $ml={8} $w={40}>樣式：</PlainLabel>
        <Combo $ml={6} $w={49}><LightSwatch /><ComboChev><Chev /></ComboChev></Combo>
        <CtlSep $ml={8} />
        <CtlIcon $ml={12} $w={22}>
          <Svg viewBox="0 0 22 22" width={22} height={22}><circle cx="11" cy="11" r="10.500" fill="#bdbdbd" /><path d="M11 11L11 .5M11 11L20 16M11 11L2 16M11 11L4 3M11 11L18 3M11 11L11 21.500" stroke="#555" strokeWidth="1.200" /><circle cx="11" cy="11" r="2.500" fill="#555" /></Svg>
        </CtlIcon>
        <CtlSep $ml={13} />
        <CtlIcon $ml={16} $w={31}><AlignToIcon /><Chev s={8} /></CtlIcon>
        <CtlIcon $ml={15} $w={24}><AlignIcon k="l" /></CtlIcon>
        <CtlIcon $ml={9} $w={24}><AlignIcon k="hc" /></CtlIcon>
        <CtlIcon $ml={8} $w={24}><AlignIcon k="r" /></CtlIcon>
        <CtlIcon $ml={16} $w={24}><AlignIcon k="t" /></CtlIcon>
        <CtlIcon $ml={7} $w={24}><AlignIcon k="vc" /></CtlIcon>
        <CtlIcon $ml={9} $w={24}><AlignIcon k="b" /></CtlIcon>
        <CtlSep $ml={14} />
        <CtlLabel $ml={8} $w={40}>形狀：</CtlLabel>
        <CtlSep $ml={20} />
        <CtlLabel $ml={8} $w={31}>變形</CtlLabel>
        <CtlSep $ml={6} />
        <CtlIcon $ml={11} $w={24}>
          <Svg viewBox="0 0 24 24" width={21} height={21} fill="none" stroke="#c6c6c6" strokeWidth="1.400"><path d="M5 6H19V18H5Z" /><path d="M1 1L7 7M23 1L17 7M1 23L7 17M23 23L17 17" strokeWidth="2.200" /></Svg>
        </CtlIcon>
        <CtlIcon $ml={15} $w={41}>
          <Svg viewBox="0 0 28 26" width={28} height={26} fill="none" stroke="#c6c6c6" strokeWidth="1.300"><rect x="1" y="8" width="11" height="11" /><path d="M8 2H22V14" /><path d="M12 10V26L16 21H24Z" fill="#c6c6c6" stroke="none" /></Svg>
          <Chev s={9} />
        </CtlIcon>
        <CtlSep $ml={6} />
        <CtlIcon $ml={13} $w={46}>
          <Svg viewBox="0 0 28 26" width={28} height={26} fill="none" stroke="#c6c6c6" strokeWidth="1.300"><rect x="1" y="8" width="10" height="10" /><path d="M7 3H20V8" /><path d="M8 25L12 14L21 5L25 9L16 19Z" fill="#c6c6c6" stroke="none" /></Svg>
          <Chev s={10} />
        </CtlIcon>
        <CtlRight>
          <CtlIcon $ml={0} $w={18}><Svg viewBox="0 0 18 22" width={17} height={21}><path d="M8 0h2v22H8zM0 3h6v6H0zM12 3h6v6h-6zM0 13h6v6H0zM12 13h6v6h-6z" fill="currentColor" /></Svg></CtlIcon>
          <CtlIcon $ml={16} $w={36}><Svg viewBox="0 0 20 24" width={19} height={23} fill="none" stroke="currentColor" strokeWidth="3"><path d="M3 0V8M3 16V24M3 8H12A4 4 0 0 1 12 16H6" /></Svg><Chev s={8} /></CtlIcon>
          <CtlIcon $ml={24} $w={17}><Svg viewBox="0 0 18 18" width={17} height={17}><path d="M0 1h3v3H0zM5 1h13v3H5zM0 7h3v3H0zM5 7h13v3H5zM0 13h3v3H0zM5 13h13v3H5z" fill="currentColor" /></Svg></CtlIcon>
        </CtlRight>
      </ControlBar>

      <Main>
        <LeftDock>
          <LeftHead>‹‹</LeftHead>
          <Toolbar>
            <ToolGrip />
            <ToolGrid>
              {tools.map(([ic, corner], i) => <ToolCell key={i} $active={i === 0} $corner={!!corner}><TI>{ic}</TI></ToolCell>)}
            </ToolGrid>
            <ToolSep />
            <ColorWell>
              <FillBox />
              <StrokeBox />
              <SwapSlot><Svg viewBox="0 0 16 16" width={15} height={15} fill="none" stroke="#d0d0d0" strokeWidth="2.400"><path d="M3 5H10C13 5 13 9 13 13M1 5L5 2V8ZM10 11L13 15L16 11" /></Svg></SwapSlot>
              <DefaultSlot><Svg viewBox="0 0 16 15" width={15} height={15}><rect x="5" y="5" width="10" height="9" fill="#111" stroke="#ddd" /><rect x="1" y="1" width="9" height="8" fill="#fff" stroke="#222" /></Svg></DefaultSlot>
            </ColorWell>
            <ModeRow $mt={9} $h={26}>
              <ModeCell $active><Svg viewBox="0 0 16 16" width={16} height={16}><rect width="16" height="16" fill="#111" /><rect x="2" y="2" width="12" height="12" fill="#3a3a3a" stroke="#e0755c" strokeWidth="2" /></Svg></ModeCell>
              <ModeCell><Svg viewBox="0 0 16 16" width={16} height={16}><defs><linearGradient id="mg"><stop offset="0" stopColor="#fff" /><stop offset="1" stopColor="#111" /></linearGradient></defs><rect width="16" height="16" fill="url(#mg)" stroke="#111" /></Svg></ModeCell>
              <ModeCell><Svg viewBox="0 0 16 16" width={16} height={16}><rect width="16" height="16" fill="#fff" stroke="#111" strokeWidth="2" /><path d="M1 15L15 1" stroke="#e8141c" strokeWidth="2.500" /></Svg></ModeCell>
            </ModeRow>
            <ModeRow $mt={5} $h={25}>
              <ModeCell $active><Svg viewBox="0 0 18 16" width={17} height={15}><ellipse cx="7" cy="6" rx="6.500" ry="5.500" fill="#ccc" /><rect x="8" y="7" width="9" height="8" fill="#8a8a8a" stroke="#ccc" /></Svg></ModeCell>
              <ModeCell><Svg viewBox="0 0 18 16" width={17} height={15} fill="none" stroke="#b8b8b8" strokeWidth="1.200"><ellipse cx="7" cy="6" rx="6" ry="5.500" /><rect x="8" y="8" width="8" height="7" fill="#777" /></Svg></ModeCell>
              <ModeCell><Svg viewBox="0 0 14 14" width={13} height={13} fill="none" stroke="#b0b0b0" strokeWidth="1.400"><circle cx="7" cy="7" r="5.500" /><circle cx="8.500" cy="8" r="3" fill="#777" /></Svg></ModeCell>
            </ModeRow>
            <ScreenBtn>
              <Svg viewBox="0 0 30 20" width={29} height={20} fill="none" stroke="#b8b8b8" strokeWidth="1.500"><rect x="1" y="7" width="16" height="12" fill="#535353" /><rect x="12" y="1" width="16" height="12" fill="#8e8e8e" /></Svg>
            </ScreenBtn>
            <ToolDots><i /><i /><i /></ToolDots>
            <ToolEnd />
          </Toolbar>
        </LeftDock>

        <Center>
          <TabBar>
            <DocTab>未命名-1* @ 100% (CMYK/預視)<DocClose>×</DocClose></DocTab>
          </TabBar>
          <CanvasRow>
            <Canvas>
              <PasteStrip />
              <Artboard><Diagram /></Artboard>
            </Canvas>
            <VScroll>
              <ScrollThumb />
              <ScrollDown><Chev s={10} /></ScrollDown>
            </VScroll>
          </CanvasRow>
        </Center>

        <Dock>
          <DockHead>‹‹</DockHead>
          <DockGroup $h={86}>
            <DockGrip />
            <DockBtn $active>{DockIcons.palette}</DockBtn>
            <DockBtn>{DockIcons.wedge}</DockBtn>
          </DockGroup>
          <DockGroup $h={122}>
            <DockGrip />
            <DockBtn>{DockIcons.swatch}</DockBtn>
            <DockBtn>{DockIcons.brush}</DockBtn>
            <DockBtn>{DockIcons.club}</DockBtn>
          </DockGroup>
          <DockGroup $h={121}>
            <DockGrip />
            <DockBtn>{DockIcons.stroke}</DockBtn>
            <DockBtn>{DockIcons.grad}</DockBtn>
            <DockBtn>{DockIcons.trans}</DockBtn>
          </DockGroup>
          <DockGroup $h={122}>
            <DockGrip />
            <DockBtn>{DockIcons.layers}</DockBtn>
            <DockBtn>{DockIcons.export}</DockBtn>
            <DockBtn>{DockIcons.board}</DockBtn>
          </DockGroup>
          <DockGroup $h={120}>
            <DockGrip />
            <DockBtn><GlyphA>A</GlyphA></DockBtn>
            <DockBtn><GlyphPil>¶</GlyphPil></DockBtn>
            <DockBtn><GlyphO>O</GlyphO></DockBtn>
          </DockGroup>
        </Dock>

        <Props>
          <PropsHead />
          <PropTabs>
            <PropTab $w={69} $pl={12}>資料庫</PropTab>
            <PropTab $w={53} $pl={10} $active>內容</PropTab>
          </PropTabs>
          <PropTitle>線段</PropTitle>
          <Section $h={383}>
            <SecTitle $mt={15}>Transform</SecTitle>
            <TransformGrid>
              <RefPoint>
                <Svg viewBox="0 0 25 25" width={25} height={25} fill="none" stroke="#c0c0c0" strokeWidth="1.200">
                  <path d="M1 1h6v6H1zM9.500 1h6v6h-6zM18 1h6v6h-6zM1 9.500h6v6H1zM18 9.500h6v6h-6zM1 18h6v6H1zM9.500 18h6v6h-6zM18 18h6v6h-6z" />
                  <path d="M9.500 9.500h6v6h-6z" fill="#eee" />
                </Svg>
              </RefPoint>
              <FieldLabel $col={2}>X:</FieldLabel><Field $col={3}>157.3314</Field>
              <FieldLabel $col={5}>W:</FieldLabel><Field $col={6}>51.5206 mm</Field>
              <LinkSlot>
                <Svg viewBox="0 0 20 22" width={20} height={22} fill="none" stroke="#bdbdbd" strokeWidth="1.600"><rect x="5" y="1" width="8" height="9" rx="4" /><rect x="7" y="12" width="8" height="9" rx="4" /><path d="M1 2L19 21" /></Svg>
              </LinkSlot>
              <FieldLabel $col={2}>Y:</FieldLabel><Field $col={3}>120.2447</Field>
              <FieldLabel $col={5}>H:</FieldLabel><Field $col={6}>0 mm</Field>
              <AngleRow>
                <Svg viewBox="0 0 19 14" width={18} height={14} fill="none" stroke="#bdbdbd" strokeWidth="1.500"><path d="M1 13H14L11 3L1 13ZM17 5v1.500M17 9v1.500" /></Svg>
                <Combo $ml={0} $w={69} $h={25}>
                  <ComboField $w={46}>43.974°</ComboField>
                  <ComboChev><Chev /></ComboChev>
                </Combo>
              </AngleRow>
              <FlipRow>
                <Svg viewBox="0 0 18 16" width={17} height={15}><path d="M0 2L7 8L0 14Z" fill="none" stroke="#bdbdbd" /><path d="M18 2L11 8L18 14Z" fill="#bdbdbd" /><path d="M9 0V16" stroke="#bdbdbd" strokeDasharray="2 1.500" /></Svg>
                <Svg viewBox="0 0 16 18" width={15} height={17}><path d="M2 0L8 7L14 0Z" fill="#bdbdbd" /><path d="M2 18L8 11L14 18Z" fill="none" stroke="#bdbdbd" /><path d="M0 9H16" stroke="#bdbdbd" strokeDasharray="2 1.500" /></Svg>
              </FlipRow>
            </TransformGrid>
            <ThreeDots mt={12} />
          </Section>
          <Section $h={93}>
            <SecTitle $mt={3}>Align</SecTitle>
            <AlignRow>
              <CtlIcon $ml={0} $w={32}><AlignToIcon /><Chev s={8} /></CtlIcon>
              <AlignIcon k="l" /><AlignIcon k="hc" /><AlignIcon k="r" /><AlignIcon k="t" /><AlignIcon k="vc" /><AlignIcon k="b" />
            </AlignRow>
            <ThreeDots mt={18} />
            <SecRule $mt={7} />
          </Section>
          <Section $h={200}>
            <SecTitle $mt={21}>Quick Actions</SecTitle>
            <ActionRow $cols="135px 137px" $mt={12}>
              <ActionBtn>Offset Path</ActionBtn>
              <ActionBtn>Expand Shape</ActionBtn>
            </ActionRow>
            <ActionRow $cols="1fr" $mt={13}><ActionBtn>Arrange</ActionBtn></ActionRow>
            <ActionRow $cols="1fr" $mt={13}><ActionBtn>Recolor</ActionBtn></ActionRow>
            <SplitRow>
              <SplitMain>Start Global Edit</SplitMain>
              <SplitChev><Chev /></SplitChev>
            </SplitRow>
          </Section>
        </Props>
      </Main>

      <ColorPanel>
        <PanelStrip />
        <PanelTabs $h={33}>
          <PanelTab $w={61} $pl={6} $active><SpinIcon />顏色</PanelTab>
          <PanelTab $w={83} $pl={12}>色彩參考</PanelTab>
          <TabTools>
            <Svg viewBox="0 0 12 10" width={12} height={10} fill="none" stroke="#c6c6c6" strokeWidth="1.300"><path d="M1 1L5 5L1 9M7 1L11 5L7 9" /></Svg>
            <VDiv /><Burger />
          </TabTools>
        </PanelTabs>
        <Swatches>
          <Sw $bg="linear-gradient(to top right, #fff 0 42%, #ee1020 42% 58%, #fff 58%)" />
          <Sw $bg="#060606" />
          <Sw $bg="#fff" />
        </Swatches>
        <Spectrum />
        <PanelGrip />
      </ColorPanel>

      <AlignPanel>
        <AlignHead><span>‹‹</span><span>✕</span></AlignHead>
        <PanelTabs $h={33}>
          <PanelTab $w={55} $pl={13}>變形</PanelTab>
          <PanelTab $w={60} $pl={7} $active><SpinIcon />對齊</PanelTab>
          <PanelTab $w={98} $pl={12}>路徑管理員</PanelTab>
          <TabTools><Burger /></TabTools>
        </PanelTabs>
        <ABody $h={77}>
          <ALabel $mt={11}>對齊物件：</ALabel>
          <IconSix $mt={8}>
            <AlignIcon k="l" /><AlignIcon k="hc" /><AlignIcon k="r" /><AlignIcon k="t" /><AlignIcon k="vc" /><AlignIcon k="b" />
          </IconSix>
        </ABody>
        <ABody $h={76}>
          <ALabel $mt={10}>均分物件：</ALabel>
          <IconSix $mt={9}>
            <AlignIcon k="dt" /><AlignIcon k="dvc" /><AlignIcon k="db" /><AlignIcon k="dl" /><AlignIcon k="dhc" /><AlignIcon k="dr" />
          </IconSix>
        </ABody>
        <ABottom>
          <ALeft>
            <ALabel $mt={9}>均分間距：</ALabel>
            <SpaceRow>
              <AlignIcon k="sv" /><AlignIcon k="sh" />
              <GhostInput><GhostStep><StepIcon c="#777" /></GhostStep><GhostVal>0 mm</GhostVal></GhostInput>
            </SpaceRow>
          </ALeft>
          <ARight>
            <RightLabel>對齊至：</RightLabel>
            <RightIcon><AlignToIcon /><Chev s={9} /></RightIcon>
          </ARight>
        </ABottom>
      </AlignPanel>

      <Popover>
        <PopRow>
          <Svg viewBox="0 0 20 12" width={20} height={12} fill="none" stroke="#bdbdbd" strokeWidth="1.300"><path d="M1 0V12M19 0V12M2 6H18" /><path d="M3 6L7 3V9ZM17 6L13 3V9Z" fill="#bdbdbd" stroke="none" /></Svg>
          <Field $w={73}>51.521 mm</Field>
        </PopRow>
        <PopRow $mt={7}>
          <Svg viewBox="0 0 22 22" width={22} height={22} fill="none" stroke="#bdbdbd" strokeWidth="1.500"><path d="M6 5C11 1 20 4 20 11C20 14 19 16 17 18M2 3L6 8L11 4" /><path d="M2 12C3 17 7 21 12 21" strokeDasharray="1.500 2" /></Svg>
          <Combo $ml={-2} $w={69} $h={25}>
            <ComboField $w={46}>180°</ComboField>
            <ComboChev><Chev /></ComboChev>
          </Combo>
        </PopRow>
        <PopRule />
        <CheckRow $mt={9}><CheckBox />縮放圓角</CheckRow>
        <CheckRow $mt={10}><CheckBox />縮放筆畫和效果</CheckRow>
      </Popover>

      <Overlay width={1903} height={993} viewBox="0 0 1903 993">
        <path d="M1511 291L1600 332L1604 325L1620 348L1593 350L1597 343Z" fill="#ee1c25" />
      </Overlay>
    </Page>
  );
}
